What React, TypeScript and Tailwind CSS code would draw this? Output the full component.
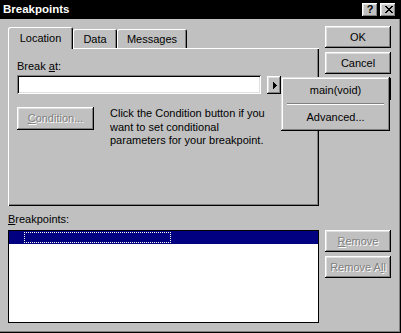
import React from "react";

// Win95-style 3D edges
const raised =
  "shadow-[inset_-1px_-1px_0_#000,inset_1px_1px_0_#fff,inset_-2px_-2px_0_#808080,inset_2px_2px_0_#dfdfdf]";
const sunken =
  "shadow-[inset_1px_1px_0_#808080,inset_-1px_-1px_0_#fff,inset_2px_2px_0_#000,inset_-2px_-2px_0_#dfdfdf]";
const disabledText = "text-[#808080] [text-shadow:1px_1px_0_#fff]";

function Button({
  children,
  disabled,
  className = "",
}: {
  children?: React.ReactNode;
  disabled?: boolean;
  className?: string;
}) {
  return (
    <div
      className={`flex items-center justify-center bg-[#c0c0c0] ${raised} ${
        disabled ? disabledText : "text-black"
      } ${className}`}
    >
      {children}
    </div>
  );
}

function CloseGlyph() {
  // 8x7 pixel cross
  const px = [
    [0, 0], [1, 0], [6, 0], [7, 0],
    [1, 1], [2, 1], [5, 1], [6, 1],
    [2, 2], [3, 2], [4, 2], [5, 2],
    [3, 3], [4, 3],
    [2, 4], [3, 4], [4, 4], [5, 4],
    [1, 5], [2, 5], [5, 5], [6, 5],
    [0, 6], [1, 6], [6, 6], [7, 6],
  ];
  return (
    <svg width="8" height="7" viewBox="0 0 8 7" shapeRendering="crispEdges">
      {px.map(([x, y]) => (
        <rect key={`${x}-${y}`} x={x} y={y} width="1" height="1" fill="#000" />
      ))}
    </svg>
  );
}

function Tab({ label, selected, width }: { label: string; selected?: boolean; width: string }) {
  if (selected) {
    return (
      <div
        className={`relative z-10 -mb-px flex h-[22px] items-center justify-center rounded-tl-[2px] rounded-tr-[2px] bg-[#c0c0c0] shadow-[inset_1px_1px_0_#fff,inset_-1px_0_0_#000,inset_-2px_0_0_#808080] ${width}`}
      >
        {label}
      </div>
    );
  }
  return (
    <div
      className={`flex h-[19px] items-center justify-center rounded-tl-[2px] rounded-tr-[2px] bg-[#c0c0c0] pt-px shadow-[inset_1px_1px_0_#fff,inset_-1px_0_0_#000,inset_-2px_0_0_#808080] ${width}`}
    >
      {label}
    </div>
  );
}

export default function App() {
  return (
    <div className="flex h-[333px] w-[401px] flex-col bg-[#c0c0c0] font-['Liberation_Sans',Arial,sans-serif] text-[11px] leading-[13px] text-black">
      {/* Title bar */}
      <div className="flex h-[19px] items-center justify-between bg-black pl-[3px] pr-[5px]">
        <span className="text-[11.5px] font-bold text-white">Breakpoints</span>
        <div className="flex gap-[2px]">
          <div className={`flex h-[14px] w-[16px] items-center justify-center bg-[#c0c0c0] text-[11px] font-bold ${raised}`}>
            ?
          </div>
          <div className={`flex h-[14px] w-[16px] items-center justify-center bg-[#c0c0c0] pl-px ${raised}`}>
            <CloseGlyph />
          </div>
        </div>
      </div>

      {/* Dialog body */}
      <div className="flex flex-1 flex-col pl-[8px] pt-[7px] shadow-[inset_-1px_-1px_0_#000,inset_-2px_-2px_0_#808080]">
        {/* Top: tab control + command buttons */}
        <div className="flex gap-[6px]">
          <div className="flex w-[311px] flex-col pt-px">
            <div className="flex h-[21px] items-end">
              <Tab label="Location" selected width="w-[65px]" />
              <Tab label="Data" width="w-[44px]" />
              <Tab label="Messages" width="w-[70px]" />
            </div>
            <div className="h-[158px] pl-[9px] pt-[12px] shadow-[inset_1px_1px_0_#fff,inset_-1px_-1px_0_#000,inset_-2px_-2px_0_#808080]">
              <div className="h-[13px]">
                Break <span className="underline">a</span>t:
              </div>
              <div className="mt-[2px] flex items-start">
                <div className={`h-[19px] w-[244px] bg-white ${sunken}`} />
                <div className="relative ml-[6px] mt-px">
                  <div className={`flex h-[18px] w-[14px] items-center justify-center bg-[#c0c0c0] pl-px ${raised}`}>
                    <svg width="4" height="7" viewBox="0 0 4 7" shapeRendering="crispEdges">
                      <path d="M0 0 L4 3.5 L0 7 Z" fill="#000" />
                    </svg>
                  </div>
                  {/* Popup menu */}
                  <div className="absolute left-[14px] top-px z-20 flex h-[54px] w-[109px] flex-col bg-[#c0c0c0] p-[2px] shadow-[inset_-1px_-1px_0_#000,inset_1px_1px_0_#dfdfdf,inset_-2px_-2px_0_#808080,inset_2px_2px_0_#fff]">
                    <div className="flex h-[22px] items-center justify-center">main(void)</div>
                    <div className="mx-[4px] mt-[2px] h-[2px] border-t border-t-[#808080] border-b border-b-white" />
                    <div className="flex flex-1 items-center justify-center">Advanced...</div>
                  </div>
                </div>
              </div>
              <div className="mt-[13px] flex items-start">
                <Button disabled className="h-[23px] w-[77px]">
                  <span>
                    <span className="underline">C</span>ondition...
                  </span>
                </Button>
                <p className="ml-[16px] leading-[13.5px]">
                  Click the Condition button if you
                  <br />
                  want to set conditional
                  <br />
                  parameters for your breakpoint.
                </p>
              </div>
            </div>
          </div>

          <div className="flex w-[66px] flex-col gap-[4px]">
            <Button className="h-[22px]">OK</Button>
            <Button className="h-[22px]">Cancel</Button>
            <Button className="h-[22px]" />
          </div>
        </div>

        {/* Bottom: breakpoint list */}
        <div className="flex gap-[6px]">
          <div className="flex w-[311px] flex-col">
            <div className="mt-[7px] h-[13px]">
              <span className="underline">B</span>reakpoints:
            </div>
            <div className="mt-[4px] h-[93px] border border-black bg-white">
              <div className="h-[13px] bg-[#000080] pl-[15px] pt-px">
                <div className="h-[11px] w-[147px] border border-dotted border-[#fffff0]" />
              </div>
            </div>
          </div>
          <div className="mt-[24px] flex w-[66px] flex-col gap-[4px]">
            <Button disabled className="h-[22px]">
              <span>
                <span className="underline">R</span>emove
              </span>
            </Button>
            <Button disabled className="h-[22px]">
              <span>
                Remove A<span className="underline">l</span>l
              </span>
            </Button>
          </div>
        </div>
      </div>
    </div>
  );
}
